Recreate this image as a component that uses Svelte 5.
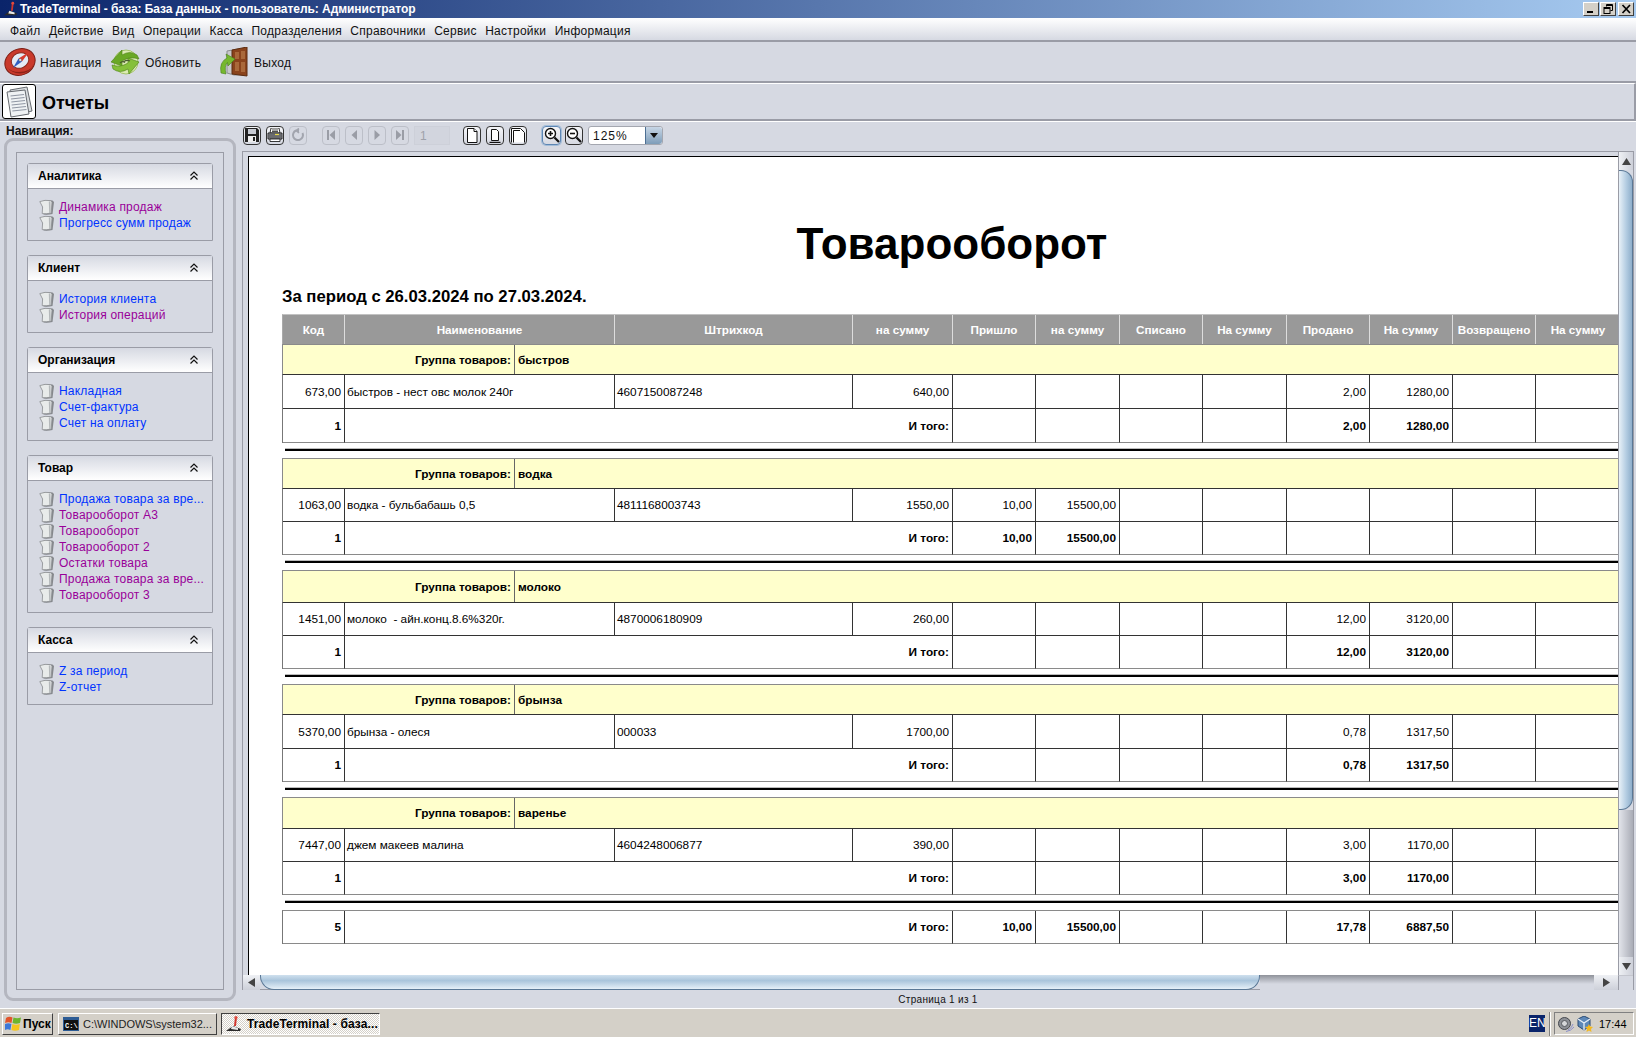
<script>
  const menu = ['Файл', 'Действие', 'Вид', 'Операции', 'Касса', 'Подразделения', 'Справочники', 'Сервис', 'Настройки', 'Информация'];

  const nav = [
    { title: 'Аналитика', items: [['Динамика продаж', 1], ['Прогресс сумм продаж', 0]] },
    { title: 'Клиент', items: [['История клиента', 0], ['История операций', 1]] },
    { title: 'Организация', items: [['Накладная', 0], ['Счет-фактура', 0], ['Счет на оплату', 0]] },
    {
      title: 'Товар',
      items: [
        ['Продажа товара за вре...', 0],
        ['Товарооборот А3', 1],
        ['Товарооборот', 1],
        ['Товарооборот 2', 1],
        ['Остатки товара', 1],
        ['Продажа товара за вре...', 1],
        ['Товарооборот 3', 1]
      ]
    },
    { title: 'Касса', items: [['Z за период', 0], ['Z-отчет', 0]] }
  ];

  const columns = ['Код', 'Наименование', 'Штрихкод', 'на сумму', 'Пришло', 'на сумму', 'Списано', 'На сумму', 'Продано', 'На сумму', 'Возвращено', 'На сумму'];

  const groups = [
    { name: 'быстров', code: '673,00', title: 'быстров - нест овс молок 240г', bar: '4607150087248', sum: '640,00', cells: ['', '', '', '', '2,00', '1280,00', '', ''], h: [31, 34, 34] },
    { name: 'водка', code: '1063,00', title: 'водка - бульбабашь 0,5', bar: '4811168003743', sum: '1550,00', cells: ['10,00', '15500,00', '', '', '', '', '', ''], h: [31, 33, 33] },
    { name: 'молоко', code: '1451,00', title: 'молоко  - айн.конц.8.6%320г.', bar: '4870006180909', sum: '260,00', cells: ['', '', '', '', '12,00', '3120,00', '', ''], h: [33, 33, 33] },
    { name: 'брынза', code: '5370,00', title: 'брынза - олеся', bar: '000033', sum: '1700,00', cells: ['', '', '', '', '0,78', '1317,50', '', ''], h: [31, 34, 33] },
    { name: 'варенье', code: '7447,00', title: 'джем макеев малина', bar: '4604248006877', sum: '390,00', cells: ['', '', '', '', '3,00', '1170,00', '', ''], h: [32, 33, 33] }
  ];

  const grand = ['10,00', '15500,00', '', '', '17,78', '6887,50', '', ''];
</script>

{#snippet paper()}
  <svg class="paper" width="15" height="16" viewBox="0 0 15 16">
    <path d="M3 2 Q8 .5 13.5 1.5 L15 3 L13.5 15 Q9 16 4.5 15.5 Z" fill="#85888c" />
    <path d="M.8 2.6 Q6 .6 11.5 1.6 L13 3 L12.2 14 Q7.5 15.2 3.2 14.6 L3.6 8 Z" fill="#e8ebea" stroke="#8a8d91" stroke-width=".8" />
    <path d="M10.6 2.4 L11 14" stroke="#b4b8ba" stroke-width="1.6" />
  </svg>
{/snippet}

{#snippet crane(size)}
  <svg class="crane" width={size} height={size} viewBox="0 0 18 18">
    <path d="M1 16 L8 11 L16 14 L15 16 Z" fill="#2b2b2b" />
    <path d="M7 11 L13 13 L13 15 L6 14 Z" fill="#e8e8e8" />
    <path d="M10 2 L12 2 L11 11 L9 11 Z" fill="#d0342c" />
    <circle cx="11" cy="2.5" r="1.6" fill="#e04a3e" />
  </svg>
{/snippet}

<div class="screen">
  <header class="titlebar">
    {@render crane(16)}
    <span class="title-text">TradeTerminal - база: База данных - пользователь: Администратор</span>
    <div class="win-buttons">
      <button class="win-btn" aria-label="Свернуть">
        <svg width="11" height="10" viewBox="0 0 11 10"><rect x="1" y="7" width="6" height="2" fill="#000" /></svg>
      </button>
      <button class="win-btn" aria-label="Восстановить">
        <svg width="11" height="10" viewBox="0 0 11 10" fill="none" stroke="#000">
          <path d="M3.5 2.5V.5H9.5V6.5H7.5" /><path d="M3 1.5H9" />
          <rect x="1" y="3.5" width="6" height="6" /><path d="M1 4.5H7" />
        </svg>
      </button>
      <button class="win-btn close" aria-label="Закрыть">
        <svg width="11" height="10" viewBox="0 0 11 10" stroke="#000" stroke-width="1.7"><path d="M1.5 1 L9 9 M9 1 L1.5 9" /></svg>
      </button>
    </div>
  </header>

  <nav class="menubar">
    {#each menu as item}
      <span>{item}</span>
    {/each}
  </nav>

  <div class="toolbar">
    <div class="tool first">
      <svg width="32" height="32" viewBox="0 0 32 32">
        <ellipse cx="16" cy="16" rx="15.5" ry="13" transform="rotate(-24 16 16)" fill="#c93a2c" stroke="#7c1f16" />
        <path d="M3 21 Q9 29 20 27 Q27 25 30 18 Q26 26 15 26 Q7 26 3 21Z" fill="#8e2318" />
        <ellipse cx="16" cy="14.5" rx="9" ry="7.6" transform="rotate(-24 16 14.5)" fill="#e4ebf5" stroke="#8d2a1e" />
        <path d="M14.5 12.5 L25 6 L18 15.5 Z" fill="#d83a2e" />
        <path d="M14.5 12.5 L18 15.5 L9 22 Z" fill="#2f5fc4" />
        <circle cx="16.2" cy="14" r="1.3" fill="#fff" stroke="#555" stroke-width=".5" />
      </svg>
      <span>Навигация</span>
    </div>
    <div class="tool refresh">
      <svg width="30" height="30" viewBox="0 0 30 30">
        <circle cx="16" cy="15" r="12" fill="#dcebb4" stroke="#a4c46a" />
        <path d="M1 15 L12 3 L12 8 Q20 3 27 8 L29 12 Q20 9 12 14 L12 19 Z" fill="#6aa826" stroke="#4c7f18" stroke-width=".6" />
        <path d="M29 15 L19 27 L18 22 Q10 27 3 22 L2 18 Q10 21 18 16 L18 11 Z" fill="#85c03a" stroke="#4c7f18" stroke-width=".6" />
        <path d="M10 16 Q12.5 13.5 15 15.5 M14 14.5 Q17 12.5 20 14" fill="none" stroke="#4a5a30" stroke-width="1.2" />
      </svg>
      <span>Обновить</span>
    </div>
    <div class="tool">
      <svg width="32" height="30" viewBox="0 0 32 30">
        <path d="M9 4 L20 2 L28 3 L28 28 L16 28 L9 26 Z" fill="#c8c9ca" stroke="#8b8d90" />
        <path d="M14 3 L29 0 L29 29 L14 27 Z" fill="#8a431c" stroke="#5c2c10" />
        <rect x="17" y="5" width="4" height="7" fill="#a9683a" />
        <rect x="23" y="4" width="4" height="8" fill="#a9683a" />
        <rect x="17" y="15" width="4" height="9" fill="#a9683a" />
        <rect x="23" y="15" width="4" height="10" fill="#a9683a" />
        <path d="M3 26 Q1 15 9 11 L8 7 L17 12 L10 19 L9.5 15.5 Q6 19 8 27 Z" fill="#76b82e" stroke="#47801a" stroke-width=".6" />
      </svg>
      <span>Выход</span>
    </div>
  </div>

  <div class="section-head">
    <div class="section-icon">
      <svg width="30" height="32" viewBox="0 0 30 32">
        <path d="M6 4 L23 1 L28 25 L11 29 Z" fill="#d9dde0" stroke="#666a70" />
        <path d="M3 6 L21 4 L25 28 L7 31 Z" fill="#eff2f4" stroke="#666a70" />
        <g stroke="#8f96a3" stroke-width="1.2">
          <path d="M6.5 10 L20 8.5" /><path d="M7 13 L20.5 11.5" /><path d="M7.3 16 L21 14.5" />
          <path d="M7.6 19 L21.5 17.5" /><path d="M8 22 L22 20.5" /><path d="M8.3 25 L22.5 23.5" />
        </g>
      </svg>
    </div>
    <h1>Отчеты</h1>
  </div>

  <main class="main">
    <aside class="sidebar">
      <div class="nav-label">Навигация:</div>
      <div class="nav-outer">
        <div class="nav-inner">
          {#each nav as box}
            <section class="box">
              <div class="box-head">
                <span>{box.title}</span>
                <svg width="10" height="9" viewBox="0 0 10 9" fill="none" stroke="#111" stroke-width="1.2">
                  <path d="M1.5 4.5 L5 1 L8.5 4.5" /><path d="M1.5 8.5 L5 5 L8.5 8.5" />
                </svg>
              </div>
              <div class="box-body">
                {#each box.items as [label, visited]}
                  <div class="link" class:visited>
                    {@render paper()}
                    <span>{label}</span>
                  </div>
                {/each}
              </div>
            </section>
          {/each}
        </div>
      </div>
    </aside>

    <div class="report">
      <div class="report-tools">
        <button class="tb" aria-label="Сохранить">
          <svg width="14" height="14" viewBox="0 0 14 14">
            <path d="M0 0H12L14 2V14H0Z" fill="#222" />
            <rect x="3" y="1" width="8" height="5" fill="#c8ccd4" />
            <rect x="3" y="8" width="8" height="6" fill="#eee" />
            <rect x="8" y="9" width="2" height="4" fill="#222" />
          </svg>
        </button>
        <button class="tb" aria-label="Печать">
          <svg width="16" height="14" viewBox="0 0 16 14">
            <path d="M4 0H12L13 5H3Z" fill="#fff" stroke="#222" stroke-width=".9" />
            <path d="M5 2H11M5 3.5H11" stroke="#222" stroke-width=".8" />
            <path d="M1 5H15V11H1Z" fill="#9a9ca2" stroke="#222" />
            <path d="M2 7H14M2 9H14" stroke="#222" stroke-width=".8" />
            <path d="M8 6.5H12" stroke="#e6d94a" stroke-width="1.2" />
            <path d="M3 11H13V13.5H3Z" fill="#fff" stroke="#222" stroke-width=".9" />
          </svg>
        </button>
        <button class="tb off" aria-label="Обновить">
          <svg width="14" height="14" viewBox="0 0 14 14" fill="none" stroke="#a2a5ae" stroke-width="2">
            <path d="M5 2.5 A5 5 0 1 0 11.5 5" /><path d="M8 .5 L5 2.5 L8 5" stroke-width="1.6" fill="#a2a5ae" />
          </svg>
        </button>

        <div class="tb-group wide">
          <button class="tb off" aria-label="В начало">
            <svg width="10" height="10" viewBox="0 0 10 10" fill="#9a9da6"><rect x="1" y="0" width="2" height="10" /><path d="M9 0V10L3.5 5Z" /></svg>
          </button>
          <button class="tb off" aria-label="Назад">
            <svg width="10" height="10" viewBox="0 0 10 10" fill="#9a9da6"><path d="M8 0V10L2.5 5Z" /></svg>
          </button>
          <button class="tb off" aria-label="Вперед">
            <svg width="10" height="10" viewBox="0 0 10 10" fill="#9a9da6"><path d="M2.5 0V10L8 5Z" /></svg>
          </button>
          <button class="tb off" aria-label="В конец">
            <svg width="10" height="10" viewBox="0 0 10 10" fill="#9a9da6"><path d="M1 0V10L6.5 5Z" /><rect x="7" y="0" width="2" height="10" /></svg>
          </button>
        </div>
        <div class="page-input">1</div>

        <div class="tb-group pages">
          <button class="tb" aria-label="Страница">
            <svg width="12" height="15" viewBox="0 0 12 15" fill="#fff" stroke="#111"><path d="M1.5 .5H8L11 3.5V14.5H1.5Z" /><path d="M8 .5V3.5H11" /></svg>
          </button>
          <button class="tb" aria-label="По ширине">
            <svg width="12" height="15" viewBox="0 0 12 15" fill="#fff" stroke="#111"><path d="M2.5 1.5H7.5L9.5 3.5V12.5H2.5Z" /><path d="M.5 14.5H11.5" stroke-width="1.4" /></svg>
          </button>
          <button class="tb" aria-label="По размеру">
            <svg width="14" height="15" viewBox="0 0 14 15" fill="#fff" stroke="#111"><path d="M.5 14.5V.5H9.5L13.5 4.5V14.5" /><path d="M2.5 14.5V2.5H9" /></svg>
          </button>
        </div>

        <div class="tb-group zooms">
          <button class="tb focus" aria-label="Увеличить">
            <svg width="16" height="16" viewBox="0 0 16 16">
              <circle cx="6.5" cy="6.5" r="5" fill="#fff" stroke="#111" stroke-width="1.4" />
              <path d="M4 6.5H9M6.5 4V9" stroke="#111" stroke-width="1.6" />
              <path d="M10.5 10.5L15 15" stroke="#111" stroke-width="2.2" />
            </svg>
          </button>
          <button class="tb" aria-label="Уменьшить">
            <svg width="16" height="16" viewBox="0 0 16 16">
              <circle cx="6.5" cy="6.5" r="5" fill="#fff" stroke="#111" stroke-width="1.4" />
              <path d="M4 6.5H9" stroke="#111" stroke-width="1.6" />
              <path d="M10.5 10.5L15 15" stroke="#111" stroke-width="2.2" />
            </svg>
          </button>
        </div>

        <div class="combo">
          <span>125%</span>
          <div class="combo-arrow">
            <svg width="8" height="5" viewBox="0 0 8 5"><path d="M0 0H8L4 5Z" fill="#111" /></svg>
          </div>
        </div>
      </div>

      <div class="viewer">
        <div class="page-cell">
          <div class="page">
            <div class="sheet">
              <h2>Товарооборот</h2>
              <div class="period">За период с 26.03.2024 по 27.03.2024.</div>

              <div class="row head">
                {#each columns as c}
                  <div>{c}</div>
                {/each}
              </div>

              {#each groups as g, i}
                <div class="group" style="height:{g.h[0]}px">
                  <div class="group-label">Группа товаров:</div>
                  <div class="group-name">{g.name}</div>
                </div>
                <div class="row" style="height:{g.h[1]}px">
                  <div class="num">{g.code}</div>
                  <div class="txt">{g.title}</div>
                  <div class="txt">{g.bar}</div>
                  <div class="num">{g.sum}</div>
                  {#each g.cells as c}
                    <div class="num">{c}</div>
                  {/each}
                </div>
                <div class="row total" style="height:{g.h[2]}px">
                  <div class="num">1</div>
                  <div class="num span3">И того:</div>
                  {#each g.cells as c}
                    <div class="num">{c}</div>
                  {/each}
                </div>
                <div class="rule"></div>
              {/each}

              <div class="row total grand">
                <div class="num">5</div>
                <div class="num span3">И того:</div>
                {#each grand as c}
                  <div class="num">{c}</div>
                {/each}
              </div>
            </div>
          </div>
        </div>

        <div class="vbar">
          <div class="sb-btn"><svg width="9" height="7" viewBox="0 0 9 7"><path d="M4.5 0L9 7H0Z" fill="#444" /></svg></div>
          <div class="vthumb"></div>
          <div class="vtrack"></div>
          <div class="sb-btn"><svg width="9" height="7" viewBox="0 0 9 7"><path d="M0 0H9L4.5 7Z" fill="#444" /></svg></div>
        </div>
        <div class="hbar">
          <div class="sb-btn h"><svg width="7" height="9" viewBox="0 0 7 9"><path d="M0 4.5L7 0V9Z" fill="#444" /></svg></div>
          <div class="hthumb"></div>
          <div class="htrack"></div>
          <div class="sb-btn h right"><svg width="7" height="9" viewBox="0 0 7 9"><path d="M7 4.5L0 0V9Z" fill="#444" /></svg></div>
        </div>
        <div class="corner"></div>
      </div>

      <div class="status">Страница 1 из 1</div>
    </div>
  </main>

  <footer class="taskbar">
    <button class="task start">
      <svg width="16" height="15" viewBox="0 0 16 15">
        <path d="M1 2 Q4 0 7.5 1.5 L6.5 7 Q3.5 5.5 0 7Z" fill="#e2542a" />
        <path d="M8.5 1.5 Q12 3 16 1.5 L15 7 Q11 8.5 7.5 7Z" fill="#6cb52d" />
        <path d="M0 8 Q3.5 6.5 6.4 8 L5.4 14 Q2.5 12.5 0 14Z" fill="#3d78d8" />
        <path d="M7.4 8 Q11 9.5 14.8 8 L14 14 Q10 15.5 6.4 14Z" fill="#f4c51d" />
      </svg>
      <span>Пуск</span>
    </button>
    <button class="task cmd">
      <svg width="16" height="14" viewBox="0 0 16 14">
        <rect width="16" height="14" fill="#2d5c94" />
        <rect x="1" y="3" width="14" height="10" fill="#111" />
        <text x="2" y="10.5" font-size="7" font-family="Liberation Mono, monospace" font-weight="700" fill="#fff">C:\</text>
      </svg>
      <span>C:\WINDOWS\system32...</span>
    </button>
    <button class="task active">
      {@render crane(18)}
      <span>TradeTerminal - база...</span>
    </button>

    <div class="tray-wrap">
      <div class="lang">EN</div>
      <div class="tray-sep"></div>
      <div class="tray">
        <svg width="16" height="16" viewBox="0 0 16 16">
          <circle cx="6.5" cy="7.5" r="6" fill="#8d9096" stroke="#44474d" />
          <circle cx="6.5" cy="7.5" r="3" fill="#d5d7da" stroke="#55585e" />
          <path d="M10 14 Q14 12 15 8 M8 15.5 Q13 15 16 11" fill="none" stroke="#8a8fc8" />
        </svg>
        <svg width="16" height="16" viewBox="0 0 16 16">
          <path d="M7 0 L13 3 L13 10 L7 14 L1 10 L1 3Z" fill="#5d88b8" stroke="#2a4a72" />
          <path d="M1 3 L7 7 L13 3 M7 7 V14" fill="none" stroke="#e6eef6" stroke-width="1.3" />
          <path d="M12 8 L13.2 10.6 L16 11 L14 13 L14.5 16 L12 14.6 L9.5 16 L10 13 L8 11 L10.8 10.6Z" fill="#f4b81e" />
        </svg>
        <span class="clock">17:44</span>
      </div>
    </div>
  </footer>
</div>

<style>
  :global(body) {
    margin: 0;
    background: #d6d9e2;
  }

  .screen {
    display: flex;
    flex-direction: column;
    width: 1636px;
    height: 1037px;
    overflow: hidden;
    background: #d6d9e2;
    font-family: "Liberation Sans", Arial, sans-serif;
    font-size: 12px;
    color: #111;
  }

  button {
    font: inherit;
    padding: 0;
    margin: 0;
    color: inherit;
  }

  svg {
    flex: none;
  }

  .titlebar {
    display: flex;
    align-items: center;
    flex: none;
    height: 18px;
    padding-left: 3px;
    background: linear-gradient(90deg, #0a246a, #a6caf0);
    color: #fff;
    font-weight: 700;
    font-size: 12px;
    box-sizing: border-box;
  }

  .title-text {
    margin-left: 1px;
    letter-spacing: -0.05px;
  }

  .win-buttons {
    display: flex;
    margin-left: auto;
    margin-right: 2px;
  }

  .win-btn {
    display: flex;
    align-items: center;
    justify-content: center;
    width: 16px;
    height: 14px;
    margin-left: 1px;
    box-sizing: border-box;
    background: #d4d0c8;
    border: 1px solid;
    border-color: #fff #404040 #404040 #fff;
  }

  .win-btn.close {
    margin-left: 2px;
  }

  .menubar {
    display: flex;
    flex: none;
    align-items: center;
    height: 24px;
    padding: 3px 0 0 10px;
    box-sizing: border-box;
    gap: 8.4px;
    background: linear-gradient(#fff, #d6d9e2);
    border-bottom: 2px solid #9a9ca6;
    letter-spacing: 0.25px;
  }

  .toolbar {
    display: flex;
    flex: none;
    align-items: center;
    height: 39px;
    padding-left: 4px;
    border-bottom: 2px solid #9a9ca6;
    letter-spacing: 0.25px;
  }

  .tool {
    display: flex;
    align-items: center;
    gap: 4px;
  }

  .tool span {
    margin-top: 2px;
  }

  .tool.first {
    width: 106px;
  }

  .tool.refresh {
    width: 108px;
    gap: 5px;
  }

  .section-head {
    display: flex;
    flex: none;
    align-items: center;
    height: 38px;
    box-sizing: border-box;
    padding-left: 2px;
    border-top: 1px solid #fff;
    border-right: 2px solid #9a9ca6;
    border-bottom: 2px solid #9a9ca6;
  }

  .section-icon {
    display: flex;
    align-items: center;
    justify-content: center;
    width: 34px;
    height: 35px;
    box-sizing: border-box;
    background: #fff;
    border: 1px solid #000;
    border-radius: 3px;
  }

  h1 {
    margin: 3px 0 0 6px;
    font-size: 18px;
    font-weight: 700;
    color: #000;
  }

  .main {
    display: flex;
    flex: 1;
    min-height: 0;
    border-top: 1px solid #fff;
  }

  .sidebar {
    flex: none;
    width: 242px;
    padding-left: 4px;
    box-sizing: border-box;
  }

  .nav-label {
    height: 16px;
    padding-left: 2px;
    font-weight: 700;
    line-height: 18px;
  }

  .nav-outer {
    width: 232px;
    height: 863px;
    padding: 11px 9px 8px;
    box-sizing: border-box;
    border: 3px solid #b4b6bf;
    border-radius: 9px;
  }

  .nav-inner {
    display: flex;
    flex-direction: column;
    gap: 14px;
    height: 100%;
    padding: 10px;
    box-sizing: border-box;
    border: 1px solid #9a9ca6;
  }

  .box {
    border: 1px solid #9a9ca6;
    border-radius: 3px 3px 0 0;
  }

  .box-head {
    display: flex;
    align-items: center;
    justify-content: space-between;
    height: 24px;
    padding: 0 13px 0 10px;
    background: linear-gradient(#d6d9e2, #fff);
    border-bottom: 1px solid #9a9ca6;
    font-weight: 700;
    color: #000;
  }

  .box-head svg {
    margin-bottom: 2px;
  }

  .box-body {
    padding: 10px 0 9px 11px;
  }

  .link {
    display: flex;
    align-items: center;
    gap: 5px;
    height: 16px;
    color: #0033ff;
    letter-spacing: 0.2px;
    white-space: nowrap;
  }

  .link.visited {
    color: #990099;
  }

  .report {
    display: flex;
    flex: 1;
    flex-direction: column;
    min-width: 0;
    padding-right: 2px;
  }

  .report-tools {
    display: flex;
    align-items: center;
    flex: none;
    height: 29px;
    padding-bottom: 3px;
    box-sizing: border-box;
    gap: 5px;
    padding-left: 1px;
  }

  .tb-group {
    display: flex;
    gap: 5px;
  }

  .tb-group.wide {
    margin-left: 10px;
  }

  .tb-group.pages {
    margin-left: 8px;
  }

  .tb-group.zooms {
    margin-left: 10px;
    gap: 4px;
  }

  .tb {
    display: flex;
    align-items: center;
    justify-content: center;
    width: 18px;
    height: 19px;
    box-sizing: border-box;
    border: 1px solid #333;
    border-radius: 4px;
    background: linear-gradient(#f4f5f8, #d6d9e2);
  }

  .tb.off {
    border-color: #bcbfc8;
    background: #d6d9e2;
  }

  .tb.focus {
    width: 19px;
    border-color: #5d86b4;
    box-shadow: 0 0 0 1px #a3bdd8;
  }

  .page-input {
    width: 36px;
    height: 19px;
    padding-left: 5px;
    box-sizing: border-box;
    background: #d2d5de;
    border: 1px solid #cdd0d9;
    color: #9ea1aa;
    line-height: 19px;
    font-size: 12px;
  }

  .combo {
    display: flex;
    justify-content: space-between;
    width: 75px;
    height: 19px;
    box-sizing: border-box;
    margin-left: 0;
    background: #fff;
    border: 1px solid #a4a7b0;
    border-radius: 3px;
    letter-spacing: 1px;
    line-height: 18px;
  }

  .combo span {
    padding-left: 4px;
  }

  .combo-arrow {
    display: flex;
    align-items: center;
    justify-content: center;
    width: 16px;
    background: linear-gradient(#c7d6e6, #7e9db9);
    border-left: 1px solid #4d6f93;
    border-radius: 0 3px 3px 0;
  }

  .viewer {
    display: grid;
    flex: none;
    grid-template-columns: 1fr 15px;
    grid-template-rows: 823px 15px;
    height: 839px;
    box-sizing: border-box;
    margin-left: 0;
    border: 1px solid #9a9ca6;
    border-bottom-width: 1px;
  }

  .page-cell {
    padding: 4px 0 0 5px;
    min-width: 0;
    min-height: 0;
    overflow: hidden;
  }

  .page {
    height: 100%;
    box-sizing: border-box;
    overflow: hidden;
    background: #fff;
    border-top: 1px solid #000;
    border-left: 1px solid #000;
  }

  .sheet {
    width: 1338px;
    padding-left: 33px;
    font-size: 11.8px;
    color: #000;
  }

  h2 {
    margin: 0;
    padding-top: 60px;
    height: 53px;
    line-height: 53px;
    font-size: 44px;
    font-weight: 700;
    text-align: center;
    transform: translateX(1px);
  }

  .period {
    margin-top: 16px;
    height: 28px;
    font-size: 16.7px;
    font-weight: 700;
    line-height: 22px;
  }

  .row {
    display: grid;
    grid-template-columns: 62px 270px 238px 100px 83px 84px 83px 84px 83px 83px 83px 85px;
    box-sizing: border-box;
    border-left: 1px solid #777;
  }

  .row > div {
    display: flex;
    align-items: center;
    box-sizing: border-box;
    border-right: 1px solid #333;
    border-bottom: 1px solid #333;
    white-space: pre;
  }

  .head {
    height: 30px;
    background: #999;
    border-top: 1px solid #c2c2c2;
    border-left: 1px solid #aaa;
    color: #fff;
    font-weight: 700;
    font-size: 11.7px;
  }

  .head > div {
    justify-content: center;
    border-right-color: #ddd;
    border-bottom: 0;
  }

  .num {
    justify-content: flex-end;
    padding-right: 3px;
  }

  .txt {
    padding-left: 2px;
  }

  .span3 {
    grid-column: span 3;
  }

  .total {
    font-weight: 700;
  }

  .total > div {
    border-bottom-color: #8a8a8a;
  }

  .grand {
    height: 34px;
    border-top: 1px solid #8a8a8a;
  }

  .group {
    display: grid;
    grid-template-columns: 232px 1fr;
    box-sizing: border-box;
    background: #ffc;
    border-top: 1px solid #8a8a8a;
    border-left: 1px solid #8a8a8a;
    border-bottom: 1px solid #333;
    font-weight: 700;
  }

  .group > div {
    display: flex;
    align-items: center;
  }

  .group-label {
    justify-content: flex-end;
    padding-right: 3px;
    border-right: 1px solid #666;
  }

  .group-name {
    padding-left: 3px;
  }

  .rule {
    height: 2px;
    margin: 6px 0 7px 3px;
    background: #000;
    box-shadow: 0 -1px 0 #bbb;
  }

  .vbar {
    display: flex;
    flex-direction: column;
    min-height: 0;
    background: #d6d9e2;
    border-left: 1px solid #9a9ca6;
  }

  .sb-btn {
    display: flex;
    flex: none;
    align-items: center;
    justify-content: center;
    height: 18px;
    background: linear-gradient(90deg, #eef0f4, #cdd0d9);
  }

  .vthumb {
    flex: none;
    height: 640px;
    background: linear-gradient(90deg, #e8f1f8, #b4cde2 55%, #8eaecb);
    border: 1px solid #5a7896;
    border-left: 0;
    border-radius: 0 12px 12px 0;
    box-sizing: border-box;
  }

  .vtrack {
    flex: 1;
    background: linear-gradient(90deg, #e2e4ea, #a9acb6);
  }

  .hbar {
    display: flex;
    min-width: 0;
  }

  .sb-btn.h {
    width: 17px;
    height: auto;
    background: linear-gradient(#eef0f4, #cdd0d9);
  }

  .sb-btn.right {
    width: 24px;
  }

  .hthumb {
    flex: none;
    width: 1000px;
    background: linear-gradient(#cfe0ee, #a9c4db 40%, #e6f0f8);
    border: 1px solid #5a7896;
    border-top: 0;
    border-radius: 0 0 14px 14px;
    box-sizing: border-box;
  }

  .htrack {
    flex: 1;
    background: linear-gradient(#8f929a, #d6d9e2 60%);
  }

  .corner {
    background: #d6d9e2;
    border-left: 1px solid #9a9ca6;
    border-top: 1px solid #c4c6ce;
  }

  .status {
    flex: none;
    height: 16px;
    font-size: 10px;
    letter-spacing: 0.3px;
    line-height: 19px;
    text-align: center;
  }

  .taskbar {
    display: flex;
    flex: none;
    align-items: center;
    height: 29px;
    box-sizing: border-box;
    padding: 1px 2px 0 2px;
    gap: 5px;
    background: #d4d0c8;
    border-top: 1px solid #fff;
    font-size: 12px;
    color: #000;
  }

  .task {
    display: flex;
    align-items: center;
    height: 22px;
    box-sizing: border-box;
    gap: 4px;
    background: #d4d0c8;
    border: 1px solid;
    border-color: #fff #404040 #404040 #fff;
    white-space: nowrap;
  }

  .start {
    width: 51px;
    padding-left: 2px;
    font-weight: 700;
    gap: 2px;
  }

  .cmd {
    width: 159px;
    padding-left: 4px;
    color: #222;
    font-size: 11px;
  }

  .active {
    width: 159px;
    margin-left: -1px;
    padding-left: 3px;
    border-color: #404040 #fff #fff #404040;
    background: repeating-conic-gradient(#fff 0 25%, #d4d0c8 0 50%) 0 0 / 2px 2px;
    font-weight: 700;
    letter-spacing: 0.1px;
  }

  .tray-wrap {
    display: flex;
    align-items: center;
    margin-left: auto;
  }

  .lang {
    width: 16px;
    height: 17px;
    background: #0a246a;
    color: #fff;
    font-size: 12px;
    line-height: 17px;
    text-align: center;
  }

  .tray-sep {
    width: 1px;
    height: 24px;
    margin: 0 4px;
    background: #808080;
    box-shadow: 1px 0 0 #fff;
  }

  .tray {
    display: flex;
    align-items: center;
    width: 80px;
    height: 23px;
    box-sizing: border-box;
    padding-left: 3px;
    gap: 3px;
    border: 1px solid;
    border-color: #808080 #fff #fff #808080;
  }

  .clock {
    margin-left: 3px;
    font-size: 11px;
  }
</style>
